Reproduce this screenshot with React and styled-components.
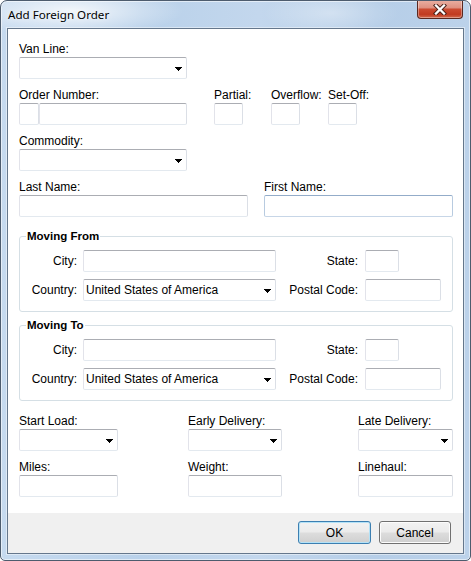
import React from "react";
import styled, { createGlobalStyle } from "styled-components";

const Global = createGlobalStyle`
  html, body { margin: 0; padding: 0; background: #ffffff; }
  body { font-family: "Liberation Sans", Arial, sans-serif; font-size: 12px; color: #000; }
  * { box-sizing: border-box; }
`;

const Window = styled.div`
  width: 471px;
  height: 561px;
  border: 1px solid #4d5c6e;
  border-radius: 7px 7px 5px 5px;
  padding: 0 6px 6px 6px;
  display: flex;
  flex-direction: column;
  overflow: hidden;
  background:
    radial-gradient(ellipse 150px 34px at 70px 10px, rgba(255,255,255,0.8), rgba(255,255,255,0) 75%),
    radial-gradient(ellipse 90px 30px at 330px 12px, rgba(255,255,255,0.35), rgba(255,255,255,0) 75%),
    linear-gradient(90deg, #c6daef 0%, #b9d1ea 30%, #c3d7ed 55%, #b6cee8 80%, #bcd2ea 100%);
  box-shadow: inset 0 0 0 1px rgba(255, 255, 255, 0.55);
`;

const TitleBar = styled.div`
  height: 27px;
  flex: none;
  display: flex;
  justify-content: space-between;
  align-items: flex-start;
`;

const Title = styled.span`
  font-family: "Noto Sans", "Segoe UI", sans-serif;
  font-size: 11.6px;
  line-height: 15px;
  padding: 5.5px 0 0 1px;
  color: #000;
  text-shadow: 0 0 6px rgba(255, 255, 255, 0.9);
`;

const CloseButton = styled.div`
  width: 46px;
  height: 19px;
  margin: -1px 1px 0 0;
  border: 1px solid #5a2820;
  border-top: none;
  border-radius: 0 0 4px 4px;
  display: flex;
  align-items: center;
  justify-content: center;
  background: linear-gradient(#eab0a3 0%, #df9181 42%, #cb4a30 52%, #c13a20 80%, #d26a4e 100%);
  box-shadow: inset 0 0 0 1px rgba(255, 255, 255, 0.35);
`;

const CloseGlyph = () => (
  <svg width="14" height="11" viewBox="0 0 14 11">
    <path d="M3 1.5L11 9.5M11 1.5L3 9.5" stroke="#4a2018" strokeWidth="4.2" strokeLinecap="square" />
    <path d="M3 1.5L11 9.5M11 1.5L3 9.5" stroke="#ffffff" strokeWidth="2.3" strokeLinecap="square" />
  </svg>
);

const Client = styled.div`
  flex: 1;
  display: flex;
  flex-direction: column;
  border: 1px solid #65778c;
  box-shadow: 0 0 0 1px rgba(255, 255, 255, 0.45);
  background: #ffffff;
`;

const Form = styled.div`
  flex: 1;
  padding: 13px 10px 0 11px;
  display: flex;
  flex-direction: column;
`;

const Row = styled.div`
  display: flex;
  margin-top: ${(p) => p.$mt || 0}px;
`;

const Field = styled.div`
  width: ${(p) => p.$w}px;
  flex: none;
  display: flex;
  flex-direction: column;
  gap: 1px;
`;

const Label = styled.span`
  display: block;
  height: 14px;
  line-height: 14px;
  white-space: nowrap;
`;

const TextBox = styled.div`
  width: ${(p) => p.$w}px;
  height: 22px;
  flex: none;
  background: #ffffff;
  border: 1px solid;
  border-color: ${(p) =>
    p.$hot ? "#93acc9 #b8cbe0 #c7d6e7 #b8cbe0" : "#abadb3 #dbdfe6 #e3e9ef #e2e3ea"};
  border-radius: 2px;
`;

const Split = styled.div`
  display: flex;
`;

const ComboBox = styled.div`
  width: ${(p) => p.$w}px;
  height: 22px;
  flex: none;
  background: #ffffff;
  border: 1px solid;
  border-color: #abadb3 #dbdfe6 #e3e9ef #e2e3ea;
  border-radius: 2px;
  display: flex;
  align-items: center;
  justify-content: space-between;
  padding: 0 4px 0 2px;
  white-space: nowrap;
  overflow: hidden;
`;

const Arrow = styled.svg`
  flex: none;
  margin-top: 1px;
`;

const Combo = ({ w, value }) => (
  <ComboBox $w={w}>
    <span>{value || ""}</span>
    <Arrow width="7" height="4" viewBox="0 0 7 4" shapeRendering="crispEdges">
      <path d="M0 0H7V1H6V2H5V3H4V4H3V3H2V2H1V1H0Z" fill="#000" />
    </Arrow>
  </ComboBox>
);

const Group = styled.fieldset`
  margin: ${(p) => p.$mt}px 0 0 0;
  padding: 6px 0 10px 0;
  border: 1px solid #d5dfe5;
  border-radius: 3px;
  min-width: 0;
`;

const Legend = styled.legend`
  margin-left: 6px;
  padding: 0 1px;
  font-weight: bold;
  font-size: 11.5px;
  line-height: 15px;
`;

const GroupGrid = styled.div`
  display: grid;
  grid-template-columns: 63px 193px 89px 76px;
  row-gap: 7px;
  align-items: center;
`;

const GroupLabel = styled.span`
  text-align: right;
  padding-right: ${(p) => p.$pr}px;
  white-space: nowrap;
  line-height: 14px;
`;

const ButtonBar = styled.div`
  height: 40px;
  flex: none;
  background: #f0f0f0;
  display: flex;
  justify-content: flex-end;
  align-items: flex-start;
  gap: 8px;
  padding: 8px 12px 0 0;
`;

const Button = styled.div`
  width: ${(p) => p.$w}px;
  height: 23px;
  display: flex;
  align-items: center;
  justify-content: center;
  border: 1px solid ${(p) => (p.$default ? "#3c7fb1" : "#707070")};
  border-radius: 3px;
  background: linear-gradient(#f2f2f2 0%, #ebebeb 48%, #dddddd 52%, #cfcfcf 100%);
  box-shadow: inset 0 0 0 1px ${(p) => (p.$default ? "#b4e2f7" : "#fcfcfc")};
  line-height: 14px;
`;

export default function App() {
  return (
    <>
      <Global />
      <Window>
        <TitleBar>
          <Title>Add Foreign Order</Title>
          <CloseButton aria-label="Close">
            <CloseGlyph />
          </CloseButton>
        </TitleBar>
        <Client>
          <Form>
            <Row>
              <Field $w={168}>
                <Label>Van Line:</Label>
                <Combo w={168} />
              </Field>
            </Row>
            <Row $mt={9}>
              <Field $w={195}>
                <Label>Order Number:</Label>
                <Split>
                  <TextBox $w={20} />
                  <TextBox $w={148} />
                </Split>
              </Field>
              <Field $w={57}>
                <Label>Partial:</Label>
                <TextBox $w={29} />
              </Field>
              <Field $w={57}>
                <Label>Overflow:</Label>
                <TextBox $w={29} />
              </Field>
              <Field $w={57}>
                <Label>Set-Off:</Label>
                <TextBox $w={29} />
              </Field>
            </Row>
            <Row $mt={9}>
              <Field $w={168}>
                <Label>Commodity:</Label>
                <Combo w={168} />
              </Field>
            </Row>
            <Row $mt={9}>
              <Field $w={245}>
                <Label>Last Name:</Label>
                <TextBox $w={229} />
              </Field>
              <Field $w={189}>
                <Label>First Name:</Label>
                <TextBox $w={189} $hot />
              </Field>
            </Row>

            <Group $mt={12}>
              <Legend>Moving From</Legend>
              <GroupGrid>
                <GroupLabel $pr={6}>City:</GroupLabel>
                <TextBox $w={193} />
                <GroupLabel $pr={7}>State:</GroupLabel>
                <TextBox $w={34} />
                <GroupLabel $pr={6}>Country:</GroupLabel>
                <Combo w={193} value="United States of America" />
                <GroupLabel $pr={7}>Postal Code:</GroupLabel>
                <TextBox $w={76} />
              </GroupGrid>
            </Group>

            <Group $mt={6}>
              <Legend>Moving To</Legend>
              <GroupGrid>
                <GroupLabel $pr={6}>City:</GroupLabel>
                <TextBox $w={193} />
                <GroupLabel $pr={7}>State:</GroupLabel>
                <TextBox $w={34} />
                <GroupLabel $pr={6}>Country:</GroupLabel>
                <Combo w={193} value="United States of America" />
                <GroupLabel $pr={7}>Postal Code:</GroupLabel>
                <TextBox $w={76} />
              </GroupGrid>
            </Group>

            <Row $mt={13}>
              <Field $w={169}>
                <Label>Start Load:</Label>
                <Combo w={99} />
              </Field>
              <Field $w={170}>
                <Label>Early Delivery:</Label>
                <Combo w={94} />
              </Field>
              <Field $w={95}>
                <Label>Late Delivery:</Label>
                <Combo w={95} />
              </Field>
            </Row>
            <Row $mt={9}>
              <Field $w={169}>
                <Label>Miles:</Label>
                <TextBox $w={99} />
              </Field>
              <Field $w={170}>
                <Label>Weight:</Label>
                <TextBox $w={94} />
              </Field>
              <Field $w={95}>
                <Label>Linehaul:</Label>
                <TextBox $w={95} />
              </Field>
            </Row>
          </Form>
          <ButtonBar>
            <Button $w={73} $default>OK</Button>
            <Button $w={72}>Cancel</Button>
          </ButtonBar>
        </Client>
      </Window>
    </>
  );
}
